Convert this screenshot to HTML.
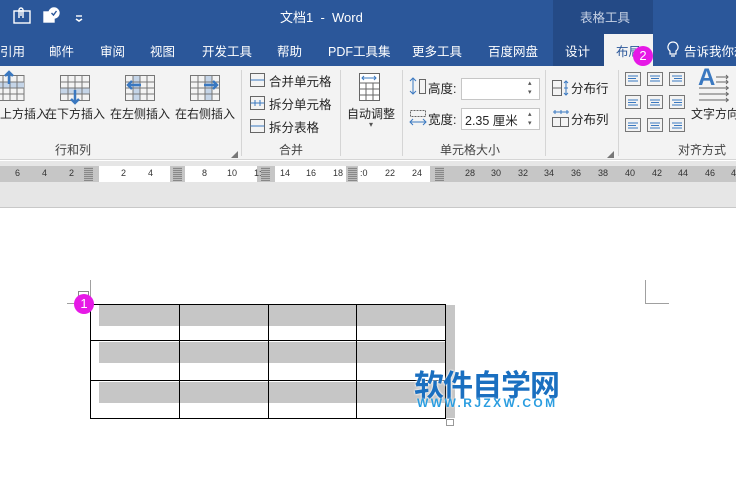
<!DOCTYPE html>
<html><head><meta charset="utf-8"><style>
*{margin:0;padding:0;box-sizing:border-box}
body{width:736px;height:495px;overflow:hidden;position:relative;background:#fff;font-family:"Liberation Sans","Noto Sans CJK SC",sans-serif;font-size:12px;color:#262626}
.a{position:absolute;white-space:nowrap}
.tab{position:absolute;top:41px;color:#fff;font-size:12.5px;white-space:nowrap}
.lbl{position:absolute;top:141px;font-size:12px;color:#444;white-space:nowrap}
.sep{position:absolute;top:70px;width:1px;height:86px;background:#d5d5d5}
.rn{position:absolute;top:168px;font-size:9px;color:#333;font-family:"Liberation Sans",sans-serif}
.blk{position:absolute;top:167px;height:14px;background:repeating-linear-gradient(0deg,#888 0 1px,#bbb 1px 2px),#999}
</style></head><body>
<div class="a" style="left:0;top:0;width:736px;height:66px;background:#2b579a"></div>
<div class="a" style="left:553px;top:0;width:100px;height:66px;background:#244a86"></div>
<div class="a" style="left:604px;top:34px;width:49px;height:32px;background:#f3f3f3"></div>
<svg class="a" style="left:12px;top:6px" width="80" height="20" viewBox="0 0 80 20" fill="none" stroke="#fff" stroke-width="1.4">
<rect x="2" y="5" width="16" height="12"/><path d="M7 12V4a2 2 0 0 1 4 0v8M9 4v6"/>
<rect x="32" y="6" width="10" height="10" fill="#fff"/><circle cx="42" cy="7" r="5" fill="#fff"/><path d="M39.5 7l2 2 3-4" stroke="#2b579a"/>
<path d="M64 13l3 2 3-2" stroke-width="1.6"/><path d="M64 10h6"/>
</svg>
<div class="a" style="left:280px;top:7px;color:#fff;font-size:13px">文档1&nbsp; - &nbsp;Word</div>
<div class="a" style="left:580px;top:7px;color:#c6d1e4;font-size:12.5px">表格工具</div>
<div class="tab" style="left:0">引用</div>
<div class="tab" style="left:49px">邮件</div>
<div class="tab" style="left:100px">审阅</div>
<div class="tab" style="left:150px">视图</div>
<div class="tab" style="left:202px">开发工具</div>
<div class="tab" style="left:277px">帮助</div>
<div class="tab" style="left:328px">PDF工具集</div>
<div class="tab" style="left:412px">更多工具</div>
<div class="tab" style="left:488px">百度网盘</div>
<div class="tab" style="left:565px">设计</div>
<div class="tab" style="left:616px;color:#2b579a">布局</div>
<svg class="a" style="left:667px;top:41px" width="12" height="18" viewBox="0 0 12 18" fill="none" stroke="#fff" stroke-width="1.2"><path d="M6 1a5 5 0 0 0-3 9v3h6v-3a5 5 0 0 0-3-9zM4 15h4"/></svg>
<div class="tab" style="left:684px">告诉我你想</div>
<div class="a" style="left:633px;top:46px;width:20px;height:20px;border-radius:50%;background:#e619e6;color:#fff;font-size:13px;text-align:center;line-height:20px">2</div>
<div class="a" style="left:0;top:66px;width:736px;height:94px;background:#f3f3f3;border-bottom:1px solid #d5d5d5"></div>
<svg class="a" style="left:0;top:70px" width="240" height="36" viewBox="0 0 240 36" fill="none" stroke="#777" stroke-width="1">
<g><rect x="-5" y="5.5" width="29" height="25" /><rect x="-5" y="12" width="29" height="6" fill="#c5d5e8" stroke="none"/><path d="M-5 12h29M-5 18h29M-5 24h29M3 6v24M10 6v24M17 6v24"/><path d="M9 14V2M5 6l4-4 4 4" stroke="#3a78c0" stroke-width="2.5"/></g>
<g transform="translate(60 0)"><rect x=".5" y="5.5" width="29" height="25"/><rect x=".5" y="18" width="29" height="6" fill="#c5d5e8" stroke="none"/><path d="M.5 12h29M.5 18h29M.5 24h29M8 6v24M15 6v24M22 6v24"/><path d="M15 20v13M11 29l4 4 4-4" stroke="#3a78c0" stroke-width="2.5"/></g>
<g transform="translate(125 0)"><rect x=".5" y="5.5" width="29" height="25"/><rect x="8" y="6" width="7" height="24" fill="#c5d5e8" stroke="none"/><path d="M.5 12h29M.5 18h29M.5 24h29M8 6v24M15 6v24M22 6v24"/><path d="M16 15H3M7 11l-4 4 4 4" stroke="#3a78c0" stroke-width="2.5"/></g>
<g transform="translate(190 0)"><rect x=".5" y="5.5" width="29" height="25"/><rect x="15" y="6" width="7" height="24" fill="#c5d5e8" stroke="none"/><path d="M.5 12h29M.5 18h29M.5 24h29M8 6v24M15 6v24M22 6v24"/><path d="M14 15h13M23 11l4 4-4 4" stroke="#3a78c0" stroke-width="2.5"/></g>
</svg>
<div class="a" style="left:0;top:105px">上方插入</div>
<div class="a" style="left:45px;top:105px">在下方插入</div>
<div class="a" style="left:110px;top:105px">在左侧插入</div>
<div class="a" style="left:175px;top:105px">在右侧插入</div>
<div class="lbl" style="left:55px">行和列</div>
<div class="a" style="left:231px;top:150px;font-size:7px;color:#777">◢</div>
<div class="sep" style="left:241px"></div>
<svg class="a" style="left:250px;top:73px" width="16" height="62" viewBox="0 0 16 62" fill="none" stroke="#666"><rect x=".5" y=".5" width="14" height="13"/><path d="M.5 7h14" stroke="#3a78c0"/><rect x=".5" y="23.5" width="14" height="13"/><path d="M.5 30h14M5 27v6M10 27v6" stroke="#3a78c0"/><rect x=".5" y="46.5" width="14" height="13"/><path d="M.5 53h14" stroke="#3a78c0"/></svg>
<div class="a" style="left:269px;top:71px;font-size:12.5px">合并单元格</div>
<div class="a" style="left:269px;top:94px;font-size:12.5px">拆分单元格</div>
<div class="a" style="left:269px;top:117px;font-size:12.5px">拆分表格</div>
<div class="lbl" style="left:279px">合并</div>
<div class="sep" style="left:340px"></div>
<svg class="a" style="left:359px;top:73px" width="22" height="28" viewBox="0 0 22 28" fill="none" stroke="#666"><rect x=".5" y=".5" width="20" height="27" fill="#fff"/><path d="M3 5h14M5 3l-2 2 2 2M15 3l2 2-2 2" stroke="#3a78c0"/><path d="M.5 10h20M.5 16h20M.5 22h20M7 10v18M14 10v18"/></svg>
<div class="a" style="left:347px;top:105px">自动调整</div>
<div class="a" style="left:369px;top:120px;font-size:8px;color:#555">▾</div>
<div class="sep" style="left:402px"></div>
<svg class="a" style="left:409px;top:77px" width="18" height="56" viewBox="0 0 18 56" fill="none" stroke="#3a78c0"><path d="M4 1v16M1 4l3-3 3 3M1 14l3 3 3-3"/><rect x="10.5" y="2.5" width="6" height="14" stroke="#666"/><rect x="1.5" y="33.5" width="15" height="6" stroke="#666" stroke-dasharray="2 1"/><path d="M1 45h16M4 42l-3 3 3 3M14 42l3 3-3 3"/></svg>
<div class="a" style="left:428px;top:78px;font-size:12.5px">高度:</div>
<div class="a" style="left:428px;top:109px;font-size:12.5px">宽度:</div>
<div class="a" style="left:461px;top:78px;width:79px;height:22px;background:#fff;border:1px solid #c6c6c6"></div>
<div class="a" style="left:461px;top:108px;width:79px;height:22px;background:#fff;border:1px solid #c6c6c6;padding:1px 0 0 3px;font-size:12.5px">2.35 厘米</div>
<div class="a" style="left:528px;top:79px;font-size:7px;line-height:9px;color:#555">▴<br>▾</div>
<div class="a" style="left:528px;top:110px;font-size:7px;line-height:9px;color:#555">▴<br>▾</div>
<div class="sep" style="left:545px"></div>
<svg class="a" style="left:552px;top:80px" width="18" height="48" viewBox="0 0 18 48" fill="none" stroke="#666"><rect x=".5" y=".5" width="9" height="15"/><path d="M.5 8h9"/><path d="M14 1v14M12 3l2-2 2 2M12 13l2 2 2-2M12 8h4" stroke="#3a78c0"/><rect x=".5" y="37.5" width="16" height="9"/><path d="M8.5 37v10"/><path d="M1 32h16M3 30v4M15 30v4M9 30v4" stroke="#3a78c0"/></svg>
<div class="a" style="left:571px;top:78px;font-size:12.5px">分布行</div>
<div class="a" style="left:571px;top:109px;font-size:12.5px">分布列</div>
<div class="lbl" style="left:440px">单元格大小</div>
<div class="a" style="left:607px;top:150px;font-size:7px;color:#777">◢</div>
<div class="sep" style="left:618px"></div>
<svg class="a" style="left:625px;top:72px" width="62" height="62" viewBox="0 0 62 62" fill="none">
<g stroke="#777"><rect x=".5" y=".5" width="15" height="13"/><rect x="22.5" y=".5" width="15" height="13"/><rect x="44.5" y=".5" width="15" height="13"/><rect x=".5" y="23.5" width="15" height="13"/><rect x="22.5" y="23.5" width="15" height="13"/><rect x="44.5" y="23.5" width="15" height="13"/><rect x=".5" y="46.5" width="15" height="13"/><rect x="22.5" y="46.5" width="15" height="13"/><rect x="44.5" y="46.5" width="15" height="13"/></g>
<g stroke="#3a78c0"><path d="M3 4h10M3 6.5h8M3 9h10M25 4h10M26 6.5h8M25 9h10M47 4h10M49 6.5h8M47 9h10"/><path d="M3 28h10M3 30.5h8M3 33h10M25 28h10M26 30.5h8M25 33h10M47 28h10M49 30.5h8M47 33h10"/><path d="M3 51h10M3 53.5h8M3 56h10M25 51h10M26 53.5h8M25 56h10M47 51h10M49 53.5h8M47 56h10"/></g>
</svg>
<div class="a" style="left:698px;top:64px;font-size:24px;font-weight:bold;color:#3a78c0">A</div>
<svg class="a" style="left:698px;top:72px" width="38" height="32" viewBox="0 0 38 32" fill="none" stroke="#666"><path d="M18 5h12M18 10h12M1 16h30M1 22h30M1 28h30M28 3l2 2-2 2M28 8l2 2-2 2M28 14l2 2-2 2M28 20l2 2-2 2M28 26l2 2-2 2"/></svg>
<div class="a" style="left:691px;top:105px">文字方向</div>
<div class="lbl" style="left:678px">对齐方式</div>
<div class="a" style="left:0;top:161px;width:736px;height:47px;background:#e6e6e6;border-bottom:1px solid #c8c8c8"></div>
<div class="a" style="left:0;top:166px;width:736px;height:16px;background:#c6c6c6"></div>
<div class="a" style="left:99px;top:166px;width:71px;height:16px;background:#fff"></div>
<div class="a" style="left:185px;top:166px;width:72px;height:16px;background:#fff"></div>
<div class="a" style="left:275px;top:166px;width:71px;height:16px;background:#fff"></div>
<div class="a" style="left:358px;top:166px;width:72px;height:16px;background:#fff"></div>
<div class="blk" style="left:84px;width:9px"></div>
<div class="blk" style="left:173px;width:9px"></div>
<div class="blk" style="left:261px;width:9px"></div>
<div class="blk" style="left:348px;width:9px"></div>
<div class="blk" style="left:435px;width:9px"></div>
<div class="rn" style="left:15px">6</div><div class="rn" style="left:42px">4</div><div class="rn" style="left:69px">2</div>
<div class="rn" style="left:121px">2</div><div class="rn" style="left:148px">4</div>
<div class="rn" style="left:202px">8</div><div class="rn" style="left:227px">10</div><div class="rn" style="left:254px">1:</div>
<div class="rn" style="left:280px">14</div><div class="rn" style="left:306px">16</div><div class="rn" style="left:333px">18</div>
<div class="rn" style="left:360px">:0</div><div class="rn" style="left:385px">22</div><div class="rn" style="left:412px">24</div>
<div class="rn" style="left:465px">28</div><div class="rn" style="left:491px">30</div><div class="rn" style="left:518px">32</div><div class="rn" style="left:544px">34</div><div class="rn" style="left:571px">36</div><div class="rn" style="left:598px">38</div><div class="rn" style="left:625px">40</div><div class="rn" style="left:652px">42</div><div class="rn" style="left:678px">44</div><div class="rn" style="left:705px">46</div><div class="rn" style="left:731px">4</div>
<div class="a" style="left:645px;top:280px;width:24px;height:24px;border-left:1px solid #a0a0a0;border-bottom:1px solid #a0a0a0"></div>
<div class="a" style="left:90px;top:280px;width:1px;height:24px;background:#a0a0a0"></div>
<div class="a" style="left:67px;top:303px;width:24px;height:1px;background:#a0a0a0"></div>
<div class="a" style="left:78px;top:291px;width:11px;height:10px;border:1px solid #888;background:#fff"></div>
<div class="a" style="left:99px;top:305px;width:346px;height:21px;background:#c6c6c6"></div>
<div class="a" style="left:99px;top:342px;width:346px;height:21px;background:#c6c6c6"></div>
<div class="a" style="left:99px;top:382px;width:346px;height:21px;background:#c6c6c6"></div>
<div class="a" style="left:446px;top:305px;width:9px;height:113px;background:#c6c6c6"></div>
<div class="a" style="left:90px;top:304px;width:356px;height:115px;border:1px solid #000"></div>
<div class="a" style="left:90px;top:340px;width:356px;height:1px;background:#000"></div>
<div class="a" style="left:90px;top:380px;width:356px;height:1px;background:#000"></div>
<div class="a" style="left:179px;top:304px;width:1px;height:115px;background:#000"></div>
<div class="a" style="left:268px;top:304px;width:1px;height:115px;background:#000"></div>
<div class="a" style="left:356px;top:304px;width:1px;height:115px;background:#000"></div>
<div class="a" style="left:446px;top:419px;width:8px;height:7px;border:1px solid #999;background:#fff"></div>
<div class="a" style="left:74px;top:294px;width:20px;height:20px;border-radius:50%;background:#e619e6;color:#fff;font-size:13px;text-align:center;line-height:20px">1</div>
<div class="a" style="left:414px;top:361px;font-size:30px;font-weight:bold;color:#1a6fc0;letter-spacing:-1px;text-shadow:0 0 2px #fff,0 0 2px #fff">软件自学网</div>
<div class="a" style="left:417px;top:396px;font-size:12px;font-weight:bold;color:#2a9de0;letter-spacing:2.4px;text-shadow:0 0 2px #fff">WWW.RJZXW.COM</div>
</body></html>
